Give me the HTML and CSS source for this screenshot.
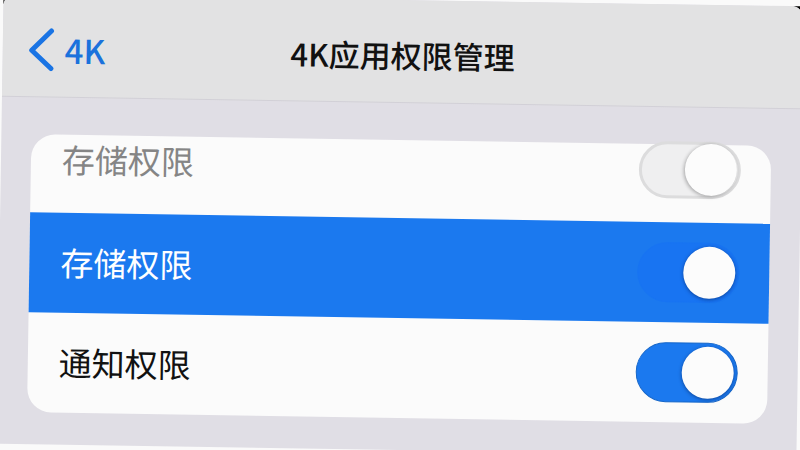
FILE: index.html
```html
<!DOCTYPE html>
<html lang="zh-CN">
<head>
  <meta charset="UTF-8" />
  <meta name="viewport" content="width=device-width, initial-scale=1.0"/>
  <title>4K应用权限管理</title>
  <link rel="stylesheet" href="styles.css">
</head>
<body>
  <div class="screen">
    <div class="panel">
      <!-- Top Bar -->
      <header class="top-bar">
        <a class="back-link" href="#">
          <svg class="back-icon" viewBox="0 0 26 44" width="26" height="44" aria-hidden="true">
            <path d="M22.500 3.500 L3 23 L22.500 41" fill="none" stroke="currentColor" stroke-width="5" stroke-linecap="round" stroke-linejoin="round"/>
          </svg>
          <span>4K</span>
        </a>
        <h1>4K应用权限管理</h1>
      </header>

      <!-- Permission List -->
      <main class="card">
        <label class="row muted">
          <span>存储权限</span>
          <input class="toggle" type="checkbox" checked>
        </label>
        <label class="row active">
          <span>存储权限</span>
          <input class="toggle" type="checkbox" checked>
        </label>
        <label class="row">
          <span>通知权限</span>
          <input class="toggle" type="checkbox" checked>
        </label>
      </main>
    </div>
  </div>
</body>
</html>
```

FILE: styles.css
```css
* {
  box-sizing: border-box;
}

body {
  font-family: 'Noto Sans CJK SC', 'Noto Sans', sans-serif;
  background-color: #fafafa;
  color: #111;
  margin: 0;
  overflow: hidden;
}

/* The whole screen is tilted a little, black shows behind the top corners */
.screen {
  min-height: 100vh;
  background:
    linear-gradient(#000, #000) top left / 10px 10px no-repeat,
    linear-gradient(#000, #000) top right / 10px 10px no-repeat;
  display: flex;
  transform: rotate(0.9deg);
}

.panel {
  flex: 1;
  background-color: #e0dee5;
  border-radius: 12px 12px 0 0;
  overflow: hidden;
}

.top-bar {
  height: 103px;
  padding: 8px 30px 0;
  background-color: #e2e2e3;
  border-bottom: 1px solid #d2d0d7;
  display: grid;
  grid-template-columns: 1fr auto 1fr;
  align-items: center;
}

.back-link {
  display: flex;
  align-items: center;
  gap: 10px;
  margin-left: -4px;
  color: #1b72dc;
  font-size: 33px;
  font-weight: 500;
  line-height: 44px;
  text-decoration: none;
}

.back-icon {
  color: #1a74e4;
}

h1 {
  margin: 0;
  font-size: 31px;
  font-weight: 500;
  line-height: 44px;
}

.card {
  margin: 37px 30px 32px;
  background-color: #fbfbfb;
  border-radius: 24px;
}

.row {
  height: 100px;
  padding: 0 30px 0 31px;
  display: flex;
  align-items: center;
  justify-content: space-between;
  font-size: 33px;
  line-height: 48px;
  cursor: pointer;
}

.row span {
  padding-bottom: 2px;
}

.row.muted {
  height: 78px;
  padding-bottom: 28px;
  color: #858585;
}

.row.active {
  background-color: #1b79ef;
  color: #fff;
}

.toggle {
  appearance: none;
  flex: none;
  display: flex;
  align-items: center;
  width: 102px;
  height: 60px;
  margin: 0;
  padding: 0 3px;
  border: 1px solid #1566c9;
  border-radius: 30px;
  background-color: #1b79ef;
  cursor: pointer;
}

.toggle::before {
  content: "";
  width: 52px;
  height: 52px;
  border-radius: 50%;
  background-color: #fcfcfc;
  box-shadow: 0 1px 4px rgba(0, 20, 70, 0.5);
}

.toggle:checked {
  justify-content: flex-end;
}

.muted .toggle {
  height: 57px;
  padding: 0 1px;
  border: 3px solid #dcdcdd;
  background-color: #efeff0;
}

.muted .toggle::before {
  box-shadow: -1px 1px 4px rgba(0, 0, 0, 0.3);
}

.active .toggle {
  border-color: #1874f2;
  background-color: #1874f2;
}
```
